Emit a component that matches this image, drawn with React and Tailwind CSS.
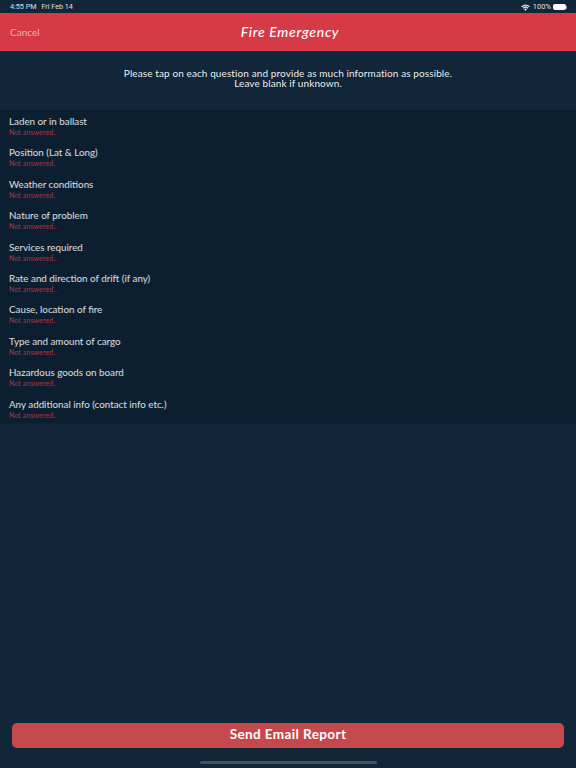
const QUESTIONS = [
  'Laden or in ballast',
  'Position (Lat & Long)',
  'Weather conditions',
  'Nature of problem',
  'Services required',
  'Rate and direction of drift (if any)',
  'Cause, location of fire',
  'Type and amount of cargo',
  'Hazardous goods on board',
  'Any additional info (contact info etc.)',
];

const EMPTY_ROWS = [1, 2, 3, 4, 5, 6, 7, 8, 9];

function WifiIcon() {
  return (
    <svg width="9" height="7" viewBox="0 0 20 15" fill="currentColor">
      <path d="M10 15l-3.2-3.6a4.6 4.6 0 0 1 6.4 0z" />
      <path d="M5.6 10.1L3.6 8a9.2 9.2 0 0 1 12.8 0l-2 2.1a6.4 6.4 0 0 0-8.8 0z" />
      <path d="M2.5 6.8L.4 4.6a13.8 13.8 0 0 1 19.2 0l-2.1 2.2a10.9 10.9 0 0 0-15 0z" />
    </svg>
  );
}

function Battery() {
  return (
    <div className="flex items-center">
      <div className="w-[13px] h-[6px] rounded-[2px] bg-white" />
      <div className="w-px h-[3px] bg-white/50" />
    </div>
  );
}

export default function App() {
  return (
    <div className="w-[576px] h-[768px] bg-[#12263a] flex flex-col font-['Lato',sans-serif] text-white overflow-hidden">
      {/* Status bar */}
      <div className="h-[13px] shrink-0 flex items-center justify-between pt-px pl-[10px] pr-[9px] text-[7.5px] font-['Roboto',sans-serif] text-white/85">
        <div className="flex gap-[5px] text-[7.2px]">
          <span>4:55 PM</span>
          <span>Fri Feb 14</span>
        </div>
        <div className="flex items-center gap-[2px]">
          <WifiIcon />
          <span className="ml-px">100%</span>
          <Battery />
        </div>
      </div>

      {/* Header */}
      <div className="h-[38px] shrink-0 bg-[#d63a47] flex items-center relative">
        <span className="pl-[10px] text-[10px] text-white/60">Cancel</span>
        <span className="absolute inset-x-0 -top-px h-full pl-[4px] flex items-center justify-center text-[14px] italic font-medium tracking-[0.7px]">Fire Emergency</span>
      </div>

      {/* Intro */}
      <div className="h-[59px] shrink-0 pt-[17px] text-[10px] leading-[10px] text-center text-white/95 tracking-[0.1px]">
        <p>
          Please tap on each question and provide as much information as possible.
          <br />
          Leave blank if unknown.
        </p>
      </div>

      {/* Questions */}
      <div className="flex flex-col bg-[#0c1f30] shrink-0">
        {QUESTIONS.map((q) => (
          <div key={q} className="h-[31.4px] pl-[9px] pt-[5px] border-b border-[#10233580]">
            <div className="text-[9.8px] leading-[12px] text-white/85">{q}</div>
            <div className="text-[7px] leading-[9px] mt-px text-[#a83646] tracking-[0.1px]">Not answered..</div>
          </div>
        ))}
      </div>

      {/* Empty rows keep their faint separators */}
      <div className="flex-1 min-h-0 overflow-hidden flex flex-col">
        {EMPTY_ROWS.map((n) => (
          <div key={n} className="h-[31.5px] shrink-0 ml-[9px] border-b border-[#152a3f]" />
        ))}
      </div>

      {/* Send button */}
      <div className="px-3 pb-[13px] shrink-0">
        <button className="w-full h-[25px] pb-[2px] rounded-[5px] bg-[#c5484c] text-[13.5px] font-bold tracking-[0.4px]">
          Send Email Report
        </button>
      </div>

      {/* Home indicator */}
      <div className="flex justify-center pb-[4px] shrink-0">
        <div className="w-[177px] h-[3px] rounded-full bg-[#4a4f55]" />
      </div>
    </div>
  );
}
